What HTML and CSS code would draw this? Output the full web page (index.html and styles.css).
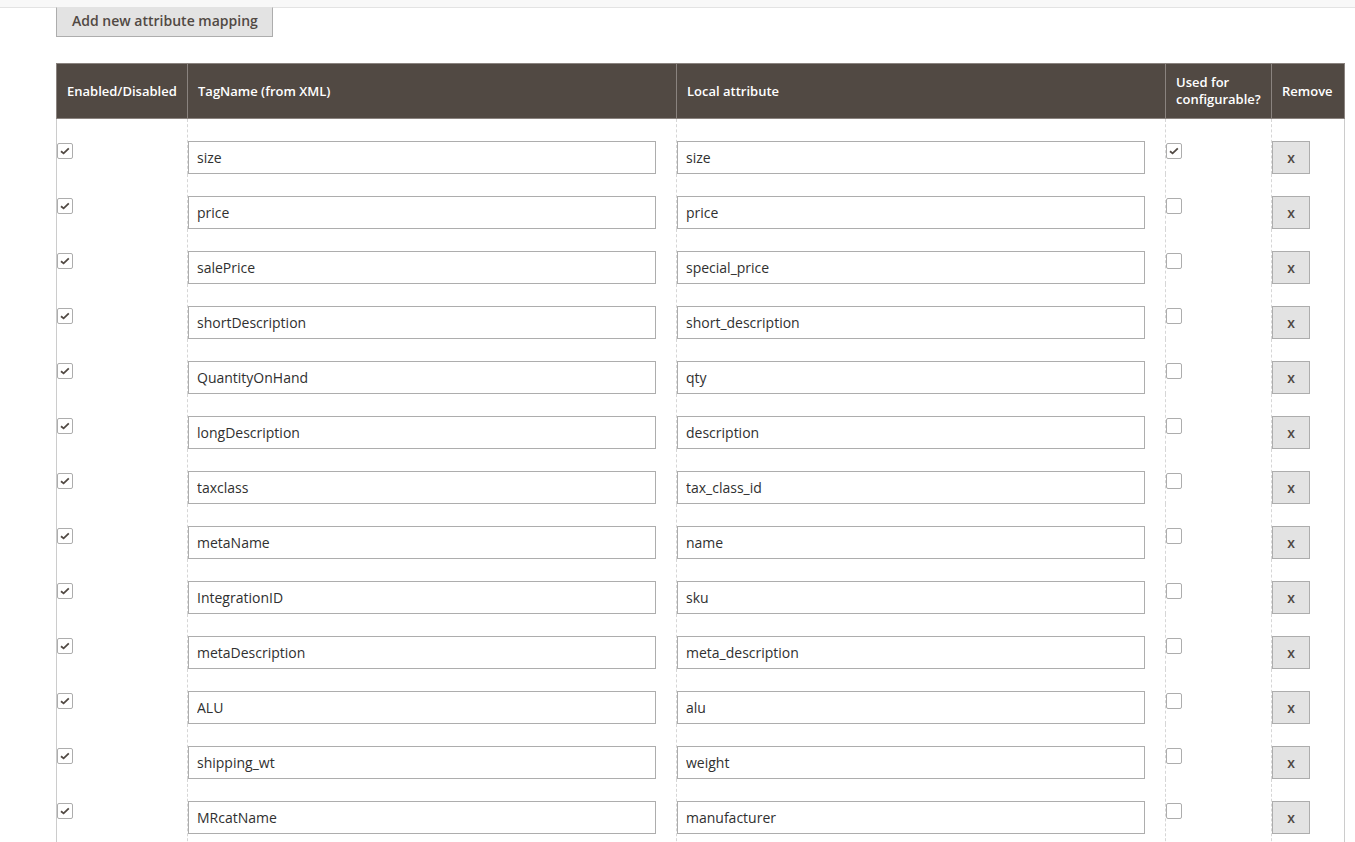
FILE: index.html
```html
<!DOCTYPE html>
<html lang="en">
<head>
<meta charset="utf-8">
<title>Attribute mapping</title>
<link rel="stylesheet" href="styles.css">
</head>
<body>
<div class="topbar"></div>
<div class="page">
  <button class="btn" type="button">Add new attribute mapping</button>

  <table class="map-table">
    <colgroup>
      <col class="c-enabled">
      <col class="c-tag">
      <col class="c-local">
      <col class="c-conf">
      <col class="c-remove">
    </colgroup>
    <thead>
      <tr>
        <th>Enabled/Disabled</th>
        <th>TagName (from XML)</th>
        <th>Local attribute</th>
        <th>Used for configurable?</th>
        <th>Remove</th>
      </tr>
    </thead>
    <tbody id="rows"></tbody>
  </table>
</div>
<script src="app.js"></script>
</body>
</html>
```

FILE: styles.css
```css
* { box-sizing: border-box; }

html, body {
  margin: 0;
  padding: 0;
  background: #fff;
  font-family: "Open Sans", "Noto Sans", sans-serif;
  color: #303030;
}

.topbar {
  height: 8px;
  background: #f8f8f8;
  border-bottom: 1px solid #e3e3e3;
}

.page {
  padding: 0 11px 0 56px;
}

.btn {
  display: block;
  margin-top: -1px;
  height: 30px;
  padding: 0 14px 3px 15px;
  font-family: inherit;
  font-size: 14px;
  font-weight: 600;
  color: #514943;
  background: #e3e3e3;
  border: 1px solid #adadad;
  border-top-color: #e3e3e3;
  border-radius: 0;
}

.map-table {
  margin-top: 26px;
  width: 1288px;
  table-layout: fixed;
  border-collapse: collapse;
  border-left: 1px solid #cccccc;
  border-right: 1px solid #cccccc;
}

.c-enabled { width: 131px; }
.c-tag { width: 489px; }
.c-local { width: 489px; }
.c-conf { width: 106px; }
.c-remove { width: 73px; }

.map-table th {
  height: 55px;
  background: #514943;
  color: #fff;
  font-size: 13px;
  font-weight: 600;
  line-height: 17px;
  text-align: left;
  padding: 0 10px;
  border: 1px solid #8a837f;
  vertical-align: middle;
}

.map-table td {
  padding: 22px 20px 0 0;
  vertical-align: top;
  border-left: 1px dashed #d6d6d6;
}

.map-table td:first-child { border-left: none; }

.map-table tr:last-child td { padding-bottom: 22px; }

.cb {
  display: block;
  width: 16px;
  height: 16px;
  margin-top: 2px;
  border: 1px solid #adadad;
  border-radius: 2px;
  background: #fff;
}

.cb svg { display: block; }

.field {
  display: block;
  width: 100%;
  height: 33px;
  padding: 0 8px;
  border: 1px solid #adadad;
  font-family: inherit;
  font-size: 14px;
  color: #303030;
  background: #fff;
  border-radius: 0;
}

.remove {
  display: block;
  width: 38px;
  height: 33px;
  padding: 0;
  background: #e3e3e3;
  border: 1px solid #adadad;
  border-radius: 0;
  font-family: inherit;
  font-size: 14px;
  font-weight: 600;
  color: #514943;
}
```

FILE: app.js
```js
// Attribute mapping rows: [enabled, tag name, local attribute, used for configurable]
var mappings = [
  [true, "size", "size", true],
  [true, "price", "price", false],
  [true, "salePrice", "special_price", false],
  [true, "shortDescription", "short_description", false],
  [true, "QuantityOnHand", "qty", false],
  [true, "longDescription", "description", false],
  [true, "taxclass", "tax_class_id", false],
  [true, "metaName", "name", false],
  [true, "IntegrationID", "sku", false],
  [true, "metaDescription", "meta_description", false],
  [true, "ALU", "alu", false],
  [true, "shipping_wt", "weight", false],
  [true, "MRcatName", "manufacturer", false]
];

var tick = '<svg width="14" height="14" viewBox="0 0 14 14"><path d="M3 7.2 L5.6 9.4 L10.8 4.4" fill="none" stroke="#514943" stroke-width="1.8"/></svg>';

function checkbox(on) {
  return '<span class="cb">' + (on ? tick : '') + '</span>';
}

var body = document.getElementById('rows');
var html = '';
mappings.forEach(function (m) {
  html += '<tr>' +
    '<td>' + checkbox(m[0]) + '</td>' +
    '<td><input class="field" type="text" value="' + m[1] + '"></td>' +
    '<td><input class="field" type="text" value="' + m[2] + '"></td>' +
    '<td>' + checkbox(m[3]) + '</td>' +
    '<td><button class="remove" type="button">x</button></td>' +
    '</tr>';
});
body.innerHTML = html;
```
